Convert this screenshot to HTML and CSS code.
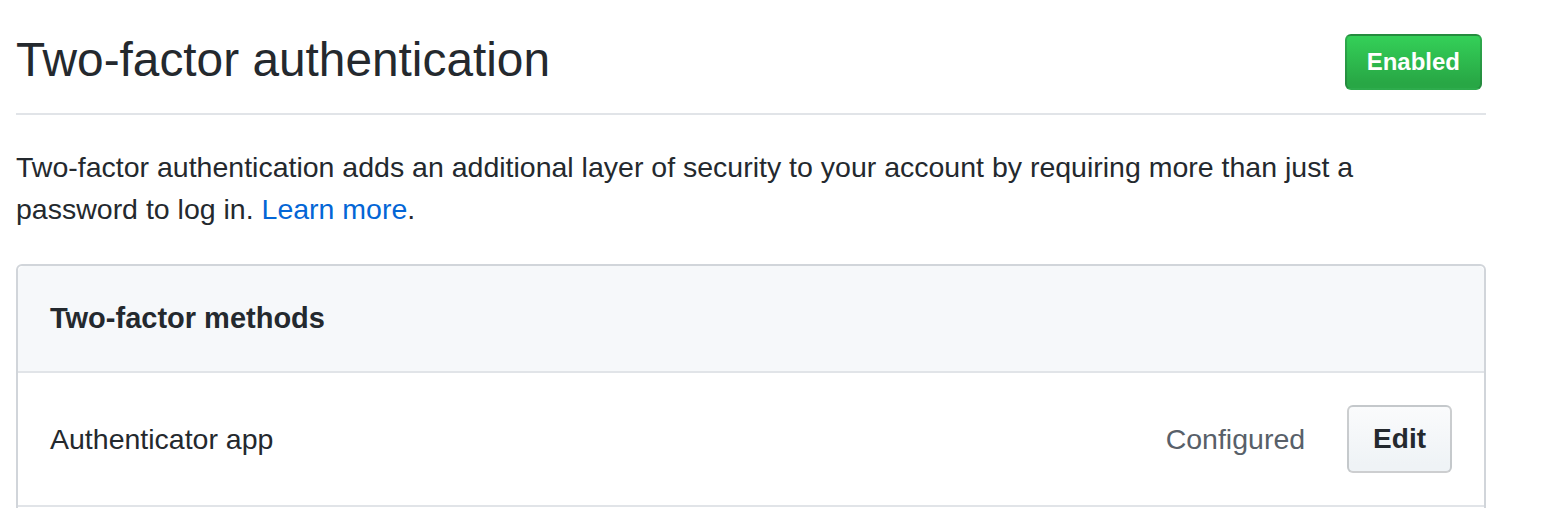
FILE: index.html
```html
<!DOCTYPE html>
<html lang="en">
<head>
<meta charset="utf-8">
<title>Two-factor authentication</title>
<link rel="stylesheet" href="styles.css">
</head>
<body>
<main class="page">
  <div class="subhead">
    <h2 class="subhead-heading">Two-factor authentication</h2>
    <span class="btn btn-primary btn-sm">Enabled</span>
  </div>
  <p class="intro">Two-factor authentication adds an additional layer of security to your account by requiring more than just a password to log in. <a href="#" class="link">Learn more</a>.</p>
  <section class="box">
    <div class="box-header">Two-factor methods</div>
    <div class="box-row">
      <span class="row-label">Authenticator app</span>
      <div class="row-actions">
        <span class="status">Configured</span>
        <button class="btn" type="button">Edit</button>
      </div>
    </div>
    <div class="box-row">
      <span class="row-label">SMS number</span>
      <div class="row-actions">
        <button class="btn" type="button">Add</button>
      </div>
    </div>
  </section>
</main>
</body>
</html>
```
FILE: styles.css
```css
html, body {
  margin: 0;
  padding: 0;
  background: #fff;
}
body {
  font-family: "Liberation Sans", Arial, Helvetica, sans-serif;
  color: #24292e;
  font-size: 28.5px;
  line-height: 42px;
}
.page {
  width: 1470px;
  margin-left: 16px;
}
.subhead {
  display: flex;
  justify-content: space-between;
  align-items: flex-end;
  padding-top: 30px;
  padding-bottom: 23px;
  padding-right: 4px;
  border-bottom: 2px solid #e1e4e8;
}
.subhead-heading {
  margin: 0;
  font-size: 47.8px;
  font-weight: 400;
  line-height: 60px;
}
.btn {
  display: inline-block;
  font-family: inherit;
  font-size: 28px;
  font-weight: 700;
  line-height: 40px;
  padding: 12px 24px;
  color: #24292e;
  background-color: #eff3f6;
  background-image: linear-gradient(-180deg, #fafbfc 0%, #eff3f6 90%);
  border: 2px solid rgba(27, 31, 35, 0.2);
  border-radius: 6px;
  white-space: nowrap;
}
.btn-sm {
  font-size: 24px;
  line-height: 40px;
  padding: 6px 20px;
}
.btn-primary {
  color: #fff;
  background-color: #28a745;
  background-image: linear-gradient(-180deg, #34d058 0%, #28a745 90%);
}
.intro {
  max-width: 1400px;
  margin: 31px 0 34px;
}
.link {
  color: #0366d6;
  text-decoration: none;
}
.box {
  border: 2px solid #d1d5da;
  border-radius: 6px;
}
.box-header {
  padding: 31px 32px 32px;
  background: #f6f8fa;
  border-bottom: 2px solid #e1e4e8;
  font-size: 29px;
  font-weight: 700;
  border-radius: 6px 6px 0 0;
}
.box-row {
  display: flex;
  align-items: center;
  justify-content: space-between;
  padding: 32px;
}
.box-row + .box-row {
  border-top: 2px solid #e1e4e8;
}
.row-actions {
  display: flex;
  align-items: center;
  gap: 42px;
}
.status {
  color: #586069;
}
```
